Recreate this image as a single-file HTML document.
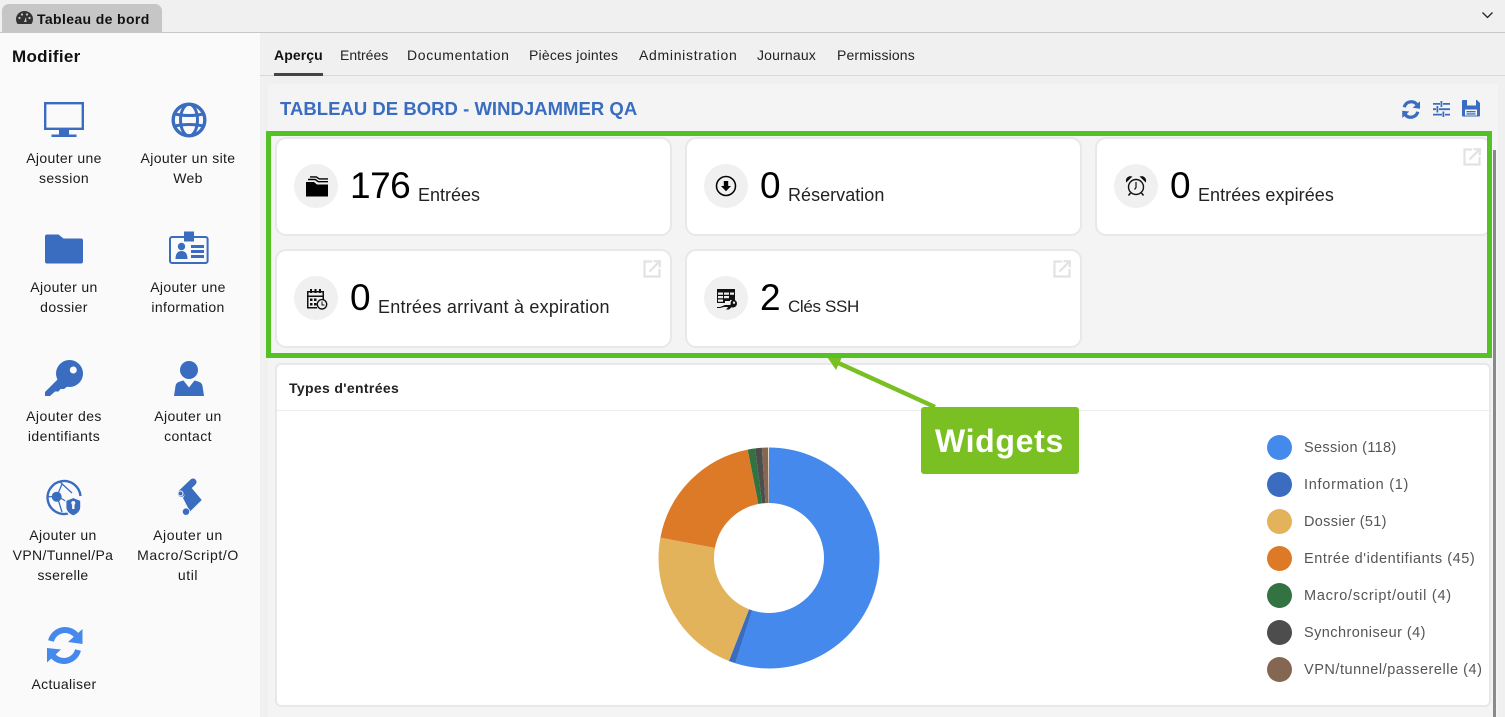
<!DOCTYPE html>
<html lang="fr"><head><meta charset="utf-8"><title>Tableau de bord</title>
<style>
html,body{margin:0;padding:0}
body{width:1505px;height:717px;overflow:hidden;position:relative;background:#f0f0f0;font-family:"Liberation Sans",sans-serif;color:#111}
div,svg{position:absolute}
.t{position:absolute;white-space:nowrap}
.side{background:#fafafa;left:0;top:33px;width:260px;height:684px}
.sl{position:absolute;width:124px;text-align:center;font-size:14px;line-height:20px;letter-spacing:.36px;color:#1a1a1a;white-space:nowrap}
.tab{position:absolute;top:47px;font-size:14px;line-height:16px;color:#222;white-space:nowrap}
.card{background:#fff;border:2px solid #e8e8e8;border-radius:11px;box-sizing:border-box;width:397px;height:99px}
.circ{width:44px;height:44px;border-radius:50%;background:#f0f0f0}
.num{position:absolute;font-size:37px;line-height:44px;color:#000;white-space:nowrap;letter-spacing:-.5px}
.lab{position:absolute;font-size:18px;line-height:22px;color:#222;white-space:nowrap}
.dot{width:25px;height:25px;border-radius:50%;left:1267px}
.leg{position:absolute;left:1304px;font-size:14.5px;line-height:18px;color:#555;white-space:nowrap}
</style></head><body>

<!-- top bar -->
<div style="left:0;top:32px;width:1505px;height:1px;background:#c8c8c8"></div>
<div style="left:2px;top:4px;width:160px;height:28px;background:#c6c6c6;border-radius:7px 7px 0 0"></div>
<svg style="left:15px;top:10px" width="19" height="16" viewBox="0 0 19 16"><path d="M9.500 1A8.500 8 0 0 0 1 9c0 2 .6 3.700 1.600 5h13.800c1-1.300 1.600-3 1.600-5A8.500 8 0 0 0 9.500 1z" fill="#333"/><circle cx="4.500" cy="8" r="1.100" fill="#ccc"/><circle cx="7" cy="4.500" r="1.100" fill="#ccc"/><circle cx="12" cy="4.500" r="1.100" fill="#ccc"/><circle cx="14.500" cy="8" r="1.100" fill="#ccc"/><path d="M9 12l2-5 .5 5z" fill="#ccc"/></svg>
<span class="t" style="left:37px;top:11px;font-size:14px;line-height:17px;font-weight:bold;color:#111;letter-spacing:.37px">Tableau de bord</span>
<svg style="left:1481px;top:11px" width="13" height="9" viewBox="0 0 13 9"><path d="M1.500 1.500L6.500 6.500 11.500 1.500" fill="none" stroke="#222" stroke-width="1.300"/></svg>

<!-- sidebar -->
<div class="side"></div>
<span class="t" style="left:12px;top:47px;font-size:17px;line-height:20px;font-weight:bold;color:#111;letter-spacing:.3px">Modifier</span>

<svg style="left:0;top:90px" width="260" height="620" viewBox="0 90 260 620" fill="#3a6cc0">
<!-- monitor -->
<rect x="45.200" y="103.200" width="37.600" height="25.600" fill="none" stroke="#3a6cc0" stroke-width="2.400"/>
<rect x="59" y="130" width="10" height="4.500"/><rect x="51.500" y="134.500" width="25" height="2.500"/>
<!-- globe -->
<g fill="none" stroke="#3a6cc0" stroke-width="3.400"><circle cx="189" cy="120" r="15.800"/><ellipse cx="189" cy="120" rx="8.500" ry="15.800" stroke-width="3"/><path d="M175 114c8 2 20 2 28 0M175 126c8-2 20-2 28 0" stroke-width="3"/></g>
<!-- folder -->
<path d="M45 236.500a2 2 0 0 1 2-2h11.500l5 4h17.500a2 2 0 0 1 2 2v21a2 2 0 0 1-2 2h-34a2 2 0 0 1-2-2z"/>
<!-- id card -->
<rect x="170" y="237" width="37.600" height="26" rx="2" fill="none" stroke="#3a6cc0" stroke-width="2"/>
<rect x="184" y="231.500" width="10" height="10"/>
<circle cx="181.500" cy="246.500" r="3.700"/><path d="M175.500 259c0-5 2-8 6-8s6 3 6 8z"/>
<rect x="191" y="245" width="13" height="3"/><rect x="191" y="250" width="13" height="3"/><rect x="191" y="255" width="13" height="3"/>
<!-- key -->
<circle cx="69.500" cy="373.500" r="13.500"/><path d="M45 392L60 377 68 386 64 389H60.500L58.500 391.500H55L50 396H45z"/><circle cx="73.300" cy="370" r="3.500" fill="#fafafa"/>
<!-- contact -->
<circle cx="189" cy="370" r="9"/><path d="M174 396l1.500-10c.5-3 2-4 8-5.500l5.500 7 5.500-7c6 1.500 7.500 2.500 8 5.500l1.500 10z"/>
<!-- vpn -->
<g fill="none" stroke="#3a6cc0" stroke-width="2.400"><path d="M68 513.500A16.500 16.500 0 1 1 80.500 496"/><path d="M57 496l5-12M57 496l12 7M60 482l12 11M47 497l10-1M57 496l5 16" stroke-width="1.300"/></g>
<circle cx="56.700" cy="496.700" r="5"/><path d="M73.300 497.500l7.500 3v7c0 4-3.500 7-7.500 8.500-4-1.500-7.500-4.500-7.500-8.500v-7z" stroke="#fafafa" stroke-width="1.200"/><rect x="72.100" y="503" width="2.400" height="6" fill="#fafafa"/><circle cx="73.300" cy="503" r="2" fill="#fafafa"/>
<!-- script -->
<path d="M190 486L201.700 500 190 511.500 183 498z"/><path d="M181 493.500L193 482" fill="none" stroke="#3a6cc0" stroke-width="7" stroke-linecap="round"/><circle cx="180.500" cy="493.500" r="2.500" fill="#3a6cc0" stroke="#fafafa" stroke-width="1"/><circle cx="186" cy="511.700" r="3.700" stroke="#fafafa" stroke-width=".8"/>
<!-- refresh -->
<g id="rf"><path d="M51 641A14.500 14.500 0 0 1 76 635M78 650A14.500 14.500 0 0 1 53 656" fill="none" stroke="#4589ec" stroke-width="6"/><path d="M82.500 629V644L68 642zM47 662.500V648L61 649.500z" fill="#4589ec"/></g>
</svg>

<div class="sl" style="left:2px;top:148px">Ajouter une<br>session</div>
<div class="sl" style="left:126px;top:148px">Ajouter un site<br>Web</div>
<div class="sl" style="left:2px;top:277px">Ajouter un<br>dossier</div>
<div class="sl" style="left:126px;top:277px">Ajouter une<br>information</div>
<div class="sl" style="left:2px;top:406px;letter-spacing:.45px">Ajouter des<br>identifiants</div>
<div class="sl" style="left:126px;top:406px">Ajouter un<br>contact</div>
<div class="sl" style="left:1px;top:525px">Ajouter un<br>VPN/Tunnel/Pa<br>sserelle</div>
<div class="sl" style="left:126px;top:525px;letter-spacing:.6px">Ajouter un<br>Macro/Script/O<br>util</div>
<div class="sl" style="left:2px;top:674px">Actualiser</div>

<!-- tabs -->
<div style="left:260px;top:75px;width:1245px;height:1px;background:#d8d8d8"></div>
<span class="tab" style="left:274px;font-weight:bold;color:#111;letter-spacing:.1px">Aperçu</span>
<div style="left:274px;top:73px;width:49px;height:3px;background:#444"></div>
<span class="tab" style="left:340px;letter-spacing:0">Entrées</span>
<span class="tab" style="left:407px;letter-spacing:.65px">Documentation</span>
<span class="tab" style="left:529px;letter-spacing:.2px">Pièces jointes</span>
<span class="tab" style="left:639px;letter-spacing:.7px">Administration</span>
<span class="tab" style="left:757px;letter-spacing:.17px">Journaux</span>
<span class="tab" style="left:837px;letter-spacing:.15px">Permissions</span>

<!-- panel -->
<div style="left:268px;top:84px;width:1230px;height:633px;background:#f4f4f4"></div>
<span class="t" style="left:280px;top:98px;font-size:18.500px;line-height:22px;color:#3a6dbf;font-weight:bold;letter-spacing:.03px">TABLEAU DE BORD - WINDJAMMER QA</span>

<svg style="left:1400px;top:98px" width="84" height="22" viewBox="0 0 84 22" fill="#3a6dbf">
<g transform="translate(-21.250 -311.250) scale(.5)"><path d="M51 641A14.500 14.500 0 0 1 76 635M78 650A14.500 14.500 0 0 1 53 656" fill="none" stroke="#3a6dbf" stroke-width="6.500"/><path d="M82.500 629V644L68 642zM47 662.500V648L61 649.500z"/></g>
<path d="M33 5h7v1.800h-7zM43 5h7v1.800h-7zM40.500 3h1.800v6h-1.800zM33 10.300h3v1.800h-3zM39 10.300h11v1.800H39zM36.500 8h1.800v6.500h-1.800zM33 15.700h9v1.800h-9zM45 15.700h5v1.800h-5zM42.500 13.500h1.800V19h-1.800z"/>
<path fill-rule="evenodd" d="M63 2h14l3 3v12.500a1 1 0 0 1-1 1H63a1 1 0 0 1-1-1V3a1 1 0 0 1 1-1zm4 0v5.500h9V2zm-2 9.500v6h12v-6z"/>
<rect x="66.500" y="13" width="9" height="1.300"/><rect x="66.500" y="15.300" width="9" height="1.300"/>
</svg>

<!-- cards -->
<div class="card" style="left:275px;top:137px"></div>
<div class="card" style="left:685px;top:137px"></div>
<div class="card" style="left:1095px;top:137px"></div>
<div class="card" style="left:275px;top:249px"></div>
<div class="card" style="left:685px;top:249px"></div>

<div class="circ" style="left:294px;top:164px"></div>
<div class="circ" style="left:704px;top:164px"></div>
<div class="circ" style="left:1114px;top:164px"></div>
<div class="circ" style="left:294px;top:276px"></div>
<div class="circ" style="left:704px;top:276px"></div>

<!-- card icons -->
<svg style="left:305px;top:175px" width="24" height="23" viewBox="0 0 24 23" fill="#000">
<path d="M1 7h8l3 2.500h11V21.500H1z"/><path d="M5 1.200h6.500l3 2h8.500v1.400h-9l-3-2H5zM3 3.800h7.500l3 2.200H23v1.400h-10l-3-2.200H3z"/></svg>
<svg style="left:715px;top:175px" width="22" height="22" viewBox="0 0 22 22"><circle cx="11" cy="11" r="9.500" fill="none" stroke="#000" stroke-width="1.500"/><path d="M8.800 6h4.400v5h2.800L11 16.300 6 11h2.800z" fill="#000"/></svg>
<svg style="left:1125px;top:175px" width="22" height="22" viewBox="0 0 22 22" fill="none" stroke="#111"><circle cx="11" cy="12" r="7.500" stroke-width="1.400"/><path d="M11 7v5.500l-1.500 2" stroke-width="1.200"/><path d="M1.500 6.500A4 4 0 0 1 6.500 1.800zM20.500 6.500A4 4 0 0 0 15.500 1.800z" fill="#111" stroke-width="1"/><path d="M5.500 18l-2 2.500M16.500 18l2 2.500" stroke-width="1.500"/></svg>
<svg style="left:306px;top:288px" width="22" height="22" viewBox="0 0 22 22" fill="#111">
<path fill-rule="evenodd" d="M1 3h17v9.500h-1.500V9H2.500v10h8.500v1.500H1zM2.500 4.500V7.500h14V4.500z"/>
<rect x="4" y="1" width="2" height="4"/><rect x="8.500" y="1" width="2" height="4"/><rect x="13" y="1" width="2" height="4"/>
<rect x="4" y="10.500" width="2.500" height="2.500"/><rect x="8" y="10.500" width="2.500" height="2.500"/><rect x="4" y="15" width="2.500" height="2.500"/><rect x="8" y="15" width="2.500" height="2.500"/>
<circle cx="16" cy="16.300" r="4.700" fill="#f0f0f0" stroke="#111" stroke-width="1.400"/><path d="M15.500 13.500h1v3h2v1h-3z"/></svg>
<svg style="left:716px;top:288px" width="22" height="22" viewBox="0 0 22 22" fill="#111">
<path fill-rule="evenodd" d="M1 1h18v11h-5v1H9v2H1zM2 4.500v2.300h5V4.500zm6 0v2.300h5V4.500zm6 0v2.300h4V4.500zM2 8v2.300h5V8zm6 0v2.300h5V8zM2 11.500v2.300h5v-2.300z"/>
<path d="M9 17h6v2H8l-4 1H1v-1h3z"/><path fill-rule="evenodd" d="M17 11.500a4 4 0 1 1-1.500 7.700L13 21.500h-3l4.700-5.300a4 4 0 0 1 2.300-4.700zm1 2a1.200 1.200 0 1 0 0 2.400 1.200 1.200 0 0 0 0-2.400z"/></svg>

<!-- external-link icons -->
<svg style="left:1463px;top:148px" width="18" height="18" viewBox="0 0 18 18" fill="none" stroke="#e2e2e2" stroke-width="2.200"><path d="M9 1.500H1.500v15h15V9M10.500 1.200h6.300v6.300M16.800 1.200L6.500 11.500"/></svg>
<svg style="left:643px;top:260px" width="18" height="18" viewBox="0 0 18 18" fill="none" stroke="#e2e2e2" stroke-width="2.200"><path d="M9 1.500H1.500v15h15V9M10.500 1.200h6.300v6.300M16.800 1.200L6.500 11.500"/></svg>
<svg style="left:1053px;top:260px" width="18" height="18" viewBox="0 0 18 18" fill="none" stroke="#e2e2e2" stroke-width="2.200"><path d="M9 1.500H1.500v15h15V9M10.500 1.200h6.300v6.300M16.800 1.200L6.500 11.500"/></svg>

<span class="num" style="left:350px;top:164px">176</span><span class="lab" style="left:418px;top:184px;letter-spacing:0">Entrées</span>
<span class="num" style="left:760px;top:164px">0</span><span class="lab" style="left:788px;top:184px;letter-spacing:.03px">Réservation</span>
<span class="num" style="left:1170px;top:164px">0</span><span class="lab" style="left:1198px;top:184px;letter-spacing:.05px">Entrées expirées</span>
<span class="num" style="left:350px;top:276px">0</span><span class="lab" style="left:378px;top:296px;letter-spacing:.23px">Entrées arrivant à expiration</span>
<span class="num" style="left:760px;top:276px">2</span><span class="lab" style="left:788px;top:296px;font-size:17px;letter-spacing:-.35px">Clés SSH</span>

<!-- scrollbar -->
<div style="left:1493px;top:150px;width:2.500px;height:567px;background:#8a8a8a"></div>

<!-- chart card -->
<div style="left:275px;top:363px;width:1216px;height:344px;background:#fff;border:2px solid #e8e8e8;border-radius:6px;box-sizing:border-box"></div>
<div style="left:277px;top:410px;width:1212px;height:1px;background:#ececec"></div>
<span class="t" style="left:289px;top:379px;font-size:14px;line-height:18px;font-weight:bold;color:#222;letter-spacing:.34px">Types d'entrées</span>

<svg style="left:650px;top:439px" width="238" height="238" viewBox="0 0 238 238">
<g fill="none" stroke-width="55.500" transform="rotate(-90 119 119)">
<circle cx="119" cy="119" r="82.750" pathLength="360" stroke="#4589ec" stroke-dasharray="198 360" stroke-dashoffset="0"/>
<circle cx="119" cy="119" r="82.750" pathLength="360" stroke="#3a6cc0" stroke-dasharray="3.500 360" stroke-dashoffset="-198"/>
<circle cx="119" cy="119" r="82.750" pathLength="360" stroke="#e2b35a" stroke-dasharray="79.500 360" stroke-dashoffset="-201.500"/>
<circle cx="119" cy="119" r="82.750" pathLength="360" stroke="#dd7a27" stroke-dasharray="68.300 360" stroke-dashoffset="-281"/>
<circle cx="119" cy="119" r="82.750" pathLength="360" stroke="#337241" stroke-dasharray="3.900 360" stroke-dashoffset="-349.300"/>
<circle cx="119" cy="119" r="82.750" pathLength="360" stroke="#4d4d4d" stroke-dasharray="3.500 360" stroke-dashoffset="-353.200"/>
<circle cx="119" cy="119" r="82.750" pathLength="360" stroke="#856650" stroke-dasharray="3.300 360" stroke-dashoffset="-356.700"/>
</g></svg>

<!-- legend -->
<div class="dot" style="top:435px;background:#4589ec"></div><span class="leg" style="top:439px;letter-spacing:.32px">Session (118)</span>
<div class="dot" style="top:472px;background:#3a6cc0"></div><span class="leg" style="top:476px;letter-spacing:.72px">Information (1)</span>
<div class="dot" style="top:509px;background:#e2b35a"></div><span class="leg" style="top:513px;letter-spacing:.32px">Dossier (51)</span>
<div class="dot" style="top:546px;background:#dd7a27"></div><span class="leg" style="top:550px;letter-spacing:.56px">Entrée d'identifiants (45)</span>
<div class="dot" style="top:583px;background:#337241"></div><span class="leg" style="top:587px;letter-spacing:.75px">Macro/script/outil (4)</span>
<div class="dot" style="top:620px;background:#4d4d4d"></div><span class="leg" style="top:624px;letter-spacing:.44px">Synchroniseur (4)</span>
<div class="dot" style="top:657px;background:#856650"></div><span class="leg" style="top:661px;letter-spacing:.53px">VPN/tunnel/passerelle (4)</span>

<!-- annotation -->
<svg style="left:820px;top:350px" width="130" height="70" viewBox="0 0 130 70"><path d="M115 57L14 11" stroke="#7ac023" stroke-width="4.500" fill="none"/><path d="M7 6.700L22 7 16 20z" fill="#7ac023"/></svg>
<div style="left:266px;top:131px;width:1226px;height:227px;border:5px solid #54c224;box-sizing:border-box"></div>
<div style="left:921px;top:407px;width:158px;height:67px;background:#7ac023;border-radius:3px"></div>
<span class="t" style="left:935px;top:422px;font-size:32px;line-height:38px;font-weight:bold;color:#fff;letter-spacing:.68px">Widgets</span>
</body></html>
